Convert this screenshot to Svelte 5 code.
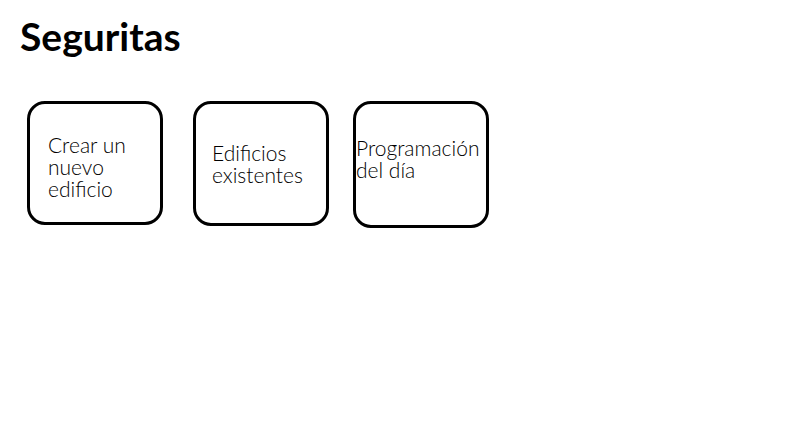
<script>
  const actions = [
    { id: 'create', label: 'Crear un nuevo edificio' },
    { id: 'existing', label: 'Edificios existentes' },
    { id: 'schedule', label: 'Programación del día' }
  ];
</script>

<main>
  <h1>Seguritas</h1>
  <nav aria-label="Acciones">
    {#each actions as action (action.id)}
      <button type="button" class={action.id}>{action.label}</button>
    {/each}
  </nav>
</main>

<style>
  :global(body) {
    margin: 0;
    background: #fff;
  }

  main {
    padding: 13px 20px;
    color: #000;
    font-family: "Century Gothic", Lato, sans-serif;
  }

  h1 {
    margin: 0 0 42px;
    font-size: 39px;
    line-height: 46px;
    font-weight: 700;
  }

  nav {
    display: flex;
    flex-wrap: wrap;
    align-items: flex-start;
    padding-left: 7px;
    gap: 30px;
  }

  button {
    box-sizing: border-box;
    width: 136px;
    min-height: 124px;
    padding: 0 16px;
    border: 3px solid #000;
    border-radius: 18px;
    background: #fff;
    color: #000;
    font-family: inherit;
    font-size: 21px;
    font-weight: 300;
    line-height: 22px;
    text-align: left;
    cursor: pointer;
  }

  .create {
    padding: 8px 18px 0;
  }

  .existing {
    min-height: 125px;
  }

  .schedule {
    min-height: 127px;
    margin-left: -6px;
    padding: 0 0 12px;
  }
</style>
